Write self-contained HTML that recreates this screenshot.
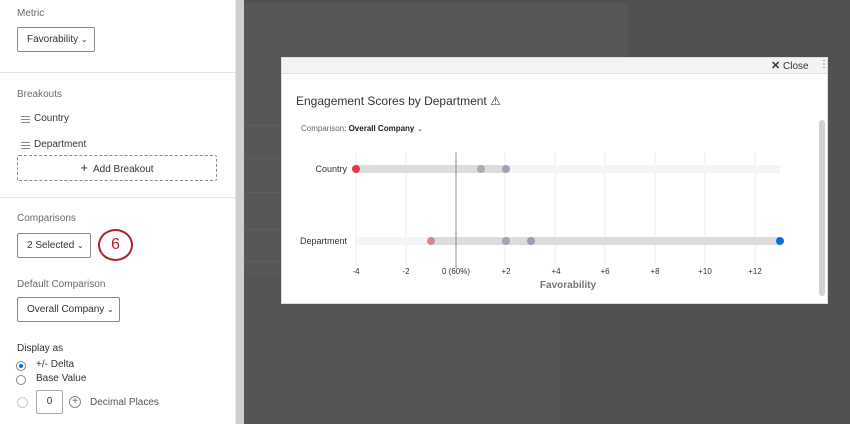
<!DOCTYPE html>
<html><head><meta charset="utf-8"><style>
*{margin:0;padding:0;box-sizing:border-box}
body{width:850px;height:424px;overflow:hidden;background:#515151;font-family:"Liberation Sans",sans-serif;position:relative}
.abs{position:absolute}
.lp{left:0;top:0;width:235px;height:424px;background:#fff}
.lbl{font-size:10px;color:#6a6a6a}
.sel{border:1px solid #8a8a8a;border-radius:2px;background:#fff;font-size:10px;color:#333;height:25px;line-height:23px;padding-left:9px}
.hr{height:1px;background:#e3e3e3;left:0;width:235px}
.t{font-size:10px;color:#333}
.ham{width:9px;height:7px;border-top:1px solid #888;border-bottom:1px solid #888}
.ham:after{content:"";position:absolute;left:0;top:2px;width:9px;height:1px;background:#888}
.gl{left:244px;width:40px;height:1px;background:#5f5f5f}
</style></head><body>
<div class="abs lp"></div>
<div class="abs" style="left:235px;top:0;width:9px;height:424px;background:#cfcfcf;border-left:1px solid #e6e6e6"></div>
<div class="abs" style="left:244px;top:3px;width:384px;height:275px;background:#575757"></div>
<div class="abs" style="left:244px;top:278px;width:316px;height:146px;background:#545454"></div>
<div class="abs gl" style="top:125px"></div>
<div class="abs gl" style="top:158px"></div>
<div class="abs gl" style="top:192px"></div>
<div class="abs gl" style="top:229px"></div>
<div class="abs gl" style="top:261px"></div>

<div class="abs lbl" style="left:17px;top:8px">Metric</div>
<div class="abs sel" style="left:17px;top:27px;width:78px">Favorability <span style="font-size:8px">⌄</span></div>
<div class="abs hr" style="top:72px"></div>
<div class="abs lbl" style="left:17px;top:89px">Breakouts</div>
<div class="abs ham" style="left:21px;top:116px"></div><div class="abs t" style="left:34px;top:113px">Country</div>
<div class="abs ham" style="left:21px;top:142px"></div><div class="abs t" style="left:34px;top:139px">Department</div>
<div class="abs" style="left:17px;top:155px;width:200px;height:26px;border:1px dashed #8a8a8a;border-radius:2px;font-size:10px;color:#333;text-align:center;line-height:24px"><span style="font-size:13px">+</span>&nbsp; Add Breakout</div>
<div class="abs hr" style="top:197px"></div>
<div class="abs lbl" style="left:17px;top:213px">Comparisons</div>
<div class="abs sel" style="left:17px;top:233px;width:74px">2 Selected <span style="font-size:8px">⌄</span></div>
<div class="abs" style="left:98px;top:229px;width:35px;height:32px;border:2px solid #b0212a;border-radius:50%;text-align:center;line-height:28px;font-size:16px;color:#b0212a">6</div>
<div class="abs lbl" style="left:17px;top:279px">Default Comparison</div>
<div class="abs sel" style="left:17px;top:297px;width:103px">Overall Company <span style="font-size:8px">⌄</span></div>
<div class="abs t" style="left:17px;top:343px">Display as</div>
<div class="abs" style="left:16px;top:361px;width:10px;height:10px;border:1px solid #888;border-radius:50%"><div class="abs" style="left:2px;top:2px;width:4px;height:4px;background:#0a6fd6;border-radius:50%"></div></div>
<div class="abs t" style="left:36px;top:359px">+/- Delta</div>
<div class="abs" style="left:16px;top:375px;width:10px;height:10px;border:1px solid #888;border-radius:50%"></div>
<div class="abs t" style="left:36px;top:373px">Base Value</div>
<div class="abs" style="left:17px;top:397px;width:11px;height:11px;border:1px solid #ccc;border-radius:50%"></div>
<div class="abs t" style="left:36px;top:390px;width:27px;height:24px;border:1px solid #aaa;border-radius:2px;text-align:center;line-height:22px">0</div>
<div class="abs" style="left:69px;top:396px;width:12px;height:12px;border:1px solid #888;border-radius:50%;font-size:10px;line-height:10px;text-align:center;color:#666">+</div>
<div class="abs t" style="left:90px;top:397px;color:#555">Decimal Places</div>

<div class="abs" style="left:281px;top:57px;width:547px;height:247px;background:#fff;border:1px solid #ddd">
 <div class="abs" style="left:0;top:0;width:545px;height:16px;background:#f3f3f6;border-bottom:1px solid #e0e0e0"></div>
 <div class="abs" style="left:489px;top:1px;font-size:10px;color:#333"><b style="font-size:11px">✕</b> Close</div>
 <div class="abs" style="left:537px;top:1px;font-size:10px;color:#666">⋮</div>
 <div class="abs" style="left:14px;top:36px;font-size:12px;color:#333">Engagement Scores by Department <span style="font-size:12px">⚠</span></div>
 <div class="abs" style="left:19px;top:66px;font-size:8px;color:#666">Comparison: <b style="color:#222">Overall Company</b> ⌄</div>
 <div class="abs" style="left:537px;top:62px;width:6px;height:176px;background:#d0d0d0;border-radius:3px"></div>
</div>
<svg class="abs" style="left:0;top:0" width="850" height="424">
 <g stroke="#ececec" stroke-width="1">
  <line x1="356" y1="152" x2="356" y2="265"/><line x1="406" y1="152" x2="406" y2="265"/>
  <line x1="505" y1="152" x2="505" y2="265"/><line x1="555" y1="152" x2="555" y2="265"/>
  <line x1="605" y1="152" x2="605" y2="265"/><line x1="655" y1="152" x2="655" y2="265"/>
  <line x1="705" y1="152" x2="705" y2="265"/><line x1="755" y1="152" x2="755" y2="265"/>
 </g>
 <rect x="356" y="165" width="424" height="8" fill="#f4f4f4"/>
 <rect x="356" y="165" width="150" height="8" fill="#dcdcdc"/>
 <rect x="356" y="237" width="424" height="8" fill="#f4f4f4"/>
 <rect x="431" y="237" width="349" height="8" fill="#dcdcdc"/>
 <line x1="456" y1="152" x2="456" y2="268" stroke="#888" stroke-width="1"/>
 <circle cx="356" cy="169" r="4" fill="#e8334a"/>
 <circle cx="481" cy="169" r="4" fill="#a9abb5"/>
 <circle cx="506" cy="169" r="4" fill="#9ea3b6"/>
 <circle cx="431" cy="241" r="4" fill="#d4898b"/>
 <circle cx="506" cy="241" r="4" fill="#9ea3b6"/>
 <circle cx="531" cy="241" r="4" fill="#98a0b9"/>
 <circle cx="780" cy="241" r="4" fill="#0a6fd6"/>
 <g font-family="Liberation Sans,sans-serif" font-size="8" fill="#333" text-anchor="middle">
  <text x="356" y="274">-4</text><text x="406" y="274">-2</text><text x="456" y="274">0 (60%)</text>
  <text x="506" y="274">+2</text><text x="556" y="274">+4</text><text x="605" y="274">+6</text>
  <text x="655" y="274">+8</text><text x="705" y="274">+10</text><text x="755" y="274">+12</text>
  <text x="568" y="288" font-size="10" font-weight="bold" fill="#777">Favorability</text>
  <text x="347" y="172" font-size="9" text-anchor="end">Country</text>
  <text x="347" y="244" font-size="9" text-anchor="end">Department</text>
 </g>
</svg>
</body></html>
